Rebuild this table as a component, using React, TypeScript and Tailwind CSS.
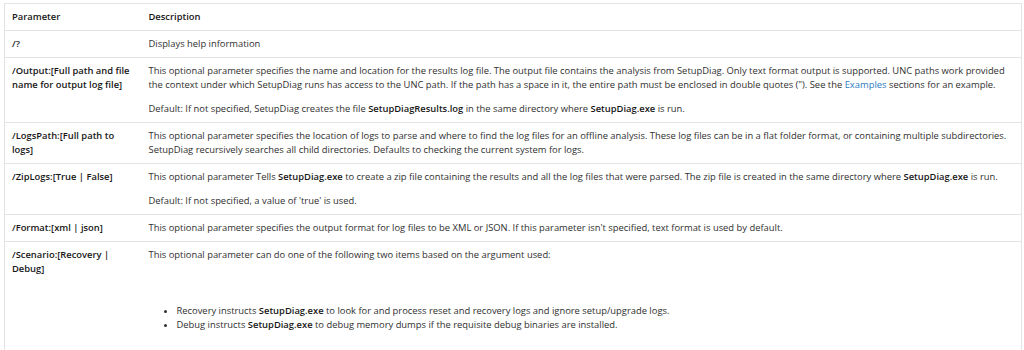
import React from "react";

const B = ({ children }: { children: React.ReactNode }) => (
  <strong className="font-semibold text-[#171717]">{children}</strong>
);

const rows: { param: React.ReactNode; desc: React.ReactNode }[] = [
  { param: <>/?</>, desc: <p>Displays help information</p> },
  {
    param: (
      <>
        /Output:[Full path and file
        <br />
        name for output log file]
      </>
    ),
    desc: (
      <>
        <p>
          This optional parameter specifies the name and location for the results log file. The output file contains the analysis from SetupDiag. Only text format output is supported. UNC paths work provided
          <br />
          the context under which SetupDiag runs has access to the UNC path. If the path has a space in it, the entire path must be enclosed in double quotes ("). See the{" "}
          <a className="text-[#2b7bbf]">Examples</a> sections for an example.
        </p>
        <p className="mt-[10px]">
          Default: If not specified, SetupDiag creates the file <B>SetupDiagResults.log</B> in the same directory where <B>SetupDiag.exe</B> is run.
        </p>
      </>
    ),
  },
  {
    param: (
      <>
        /LogsPath:[Full path to
        <br />
        logs]
      </>
    ),
    desc: (
      <p>
        This optional parameter specifies the location of logs to parse and where to find the log files for an offline analysis. These log files can be in a flat folder format, or containing multiple subdirectories.
        <br />
        SetupDiag recursively searches all child directories. Defaults to checking the current system for logs.
      </p>
    ),
  },
  {
    param: <>/ZipLogs:[True | False]</>,
    desc: (
      <>
        <p>
          This optional parameter Tells <B>SetupDiag.exe</B> to create a zip file containing the results and all the log files that were parsed. The zip file is created in the same directory where <B>SetupDiag.exe</B> is run.
        </p>
        <p className="mt-[10px]">Default: If not specified, a value of 'true' is used.</p>
      </>
    ),
  },
  {
    param: <>/Format:[xml | json]</>,
    desc: (
      <p>
        This optional parameter specifies the output format for log files to be XML or JSON. If this parameter isn't specified, text format is used by default.
      </p>
    ),
  },
  {
    param: (
      <>
        /Scenario:[Recovery |
        <br />
        Debug]
      </>
    ),
    desc: (
      <>
        <p>This optional parameter can do one of the following two items based on the argument used:</p>
        <ul className="mt-[42px] list-disc pl-[28px] pb-[20px]">
          <li>
            Recovery instructs <B>SetupDiag.exe</B> to look for and process reset and recovery logs and ignore setup/upgrade logs.
          </li>
          <li>
            Debug instructs <B>SetupDiag.exe</B> to debug memory dumps if the requisite debug binaries are installed.
          </li>
        </ul>
      </>
    ),
  },
];

export default function App() {
  return (
    <div
      className="w-[1024px] h-[350px] overflow-hidden bg-white pl-[4px] pr-[2px] pt-[3px] text-[9.4px] leading-[14px] text-[#303030]"
      style={{ fontFamily: '"Open Sans", "Noto Sans", sans-serif' }}
    >
      <table className="w-full table-fixed border-collapse border-x border-[#e3e3e3]">
        <colgroup>
          <col className="w-[137px]" />
          <col />
        </colgroup>
        <thead>
          <tr className="border-y border-[#e3e3e3]">
            <th className="px-[7px] py-[6px] text-left font-semibold text-[#171717]">Parameter</th>
            <th className="px-[7px] py-[6px] text-left font-semibold text-[#171717]">Description</th>
          </tr>
        </thead>
        <tbody>
          {rows.map((r, i) => (
            <tr key={i} className="border-b border-[#e3e3e3] align-top">
              <td className="px-[7px] py-[6px] font-semibold text-[#171717] whitespace-nowrap">{r.param}</td>
              <td className="px-[7px] py-[6px] whitespace-nowrap">{r.desc}</td>
            </tr>
          ))}
        </tbody>
      </table>
    </div>
  );
}
